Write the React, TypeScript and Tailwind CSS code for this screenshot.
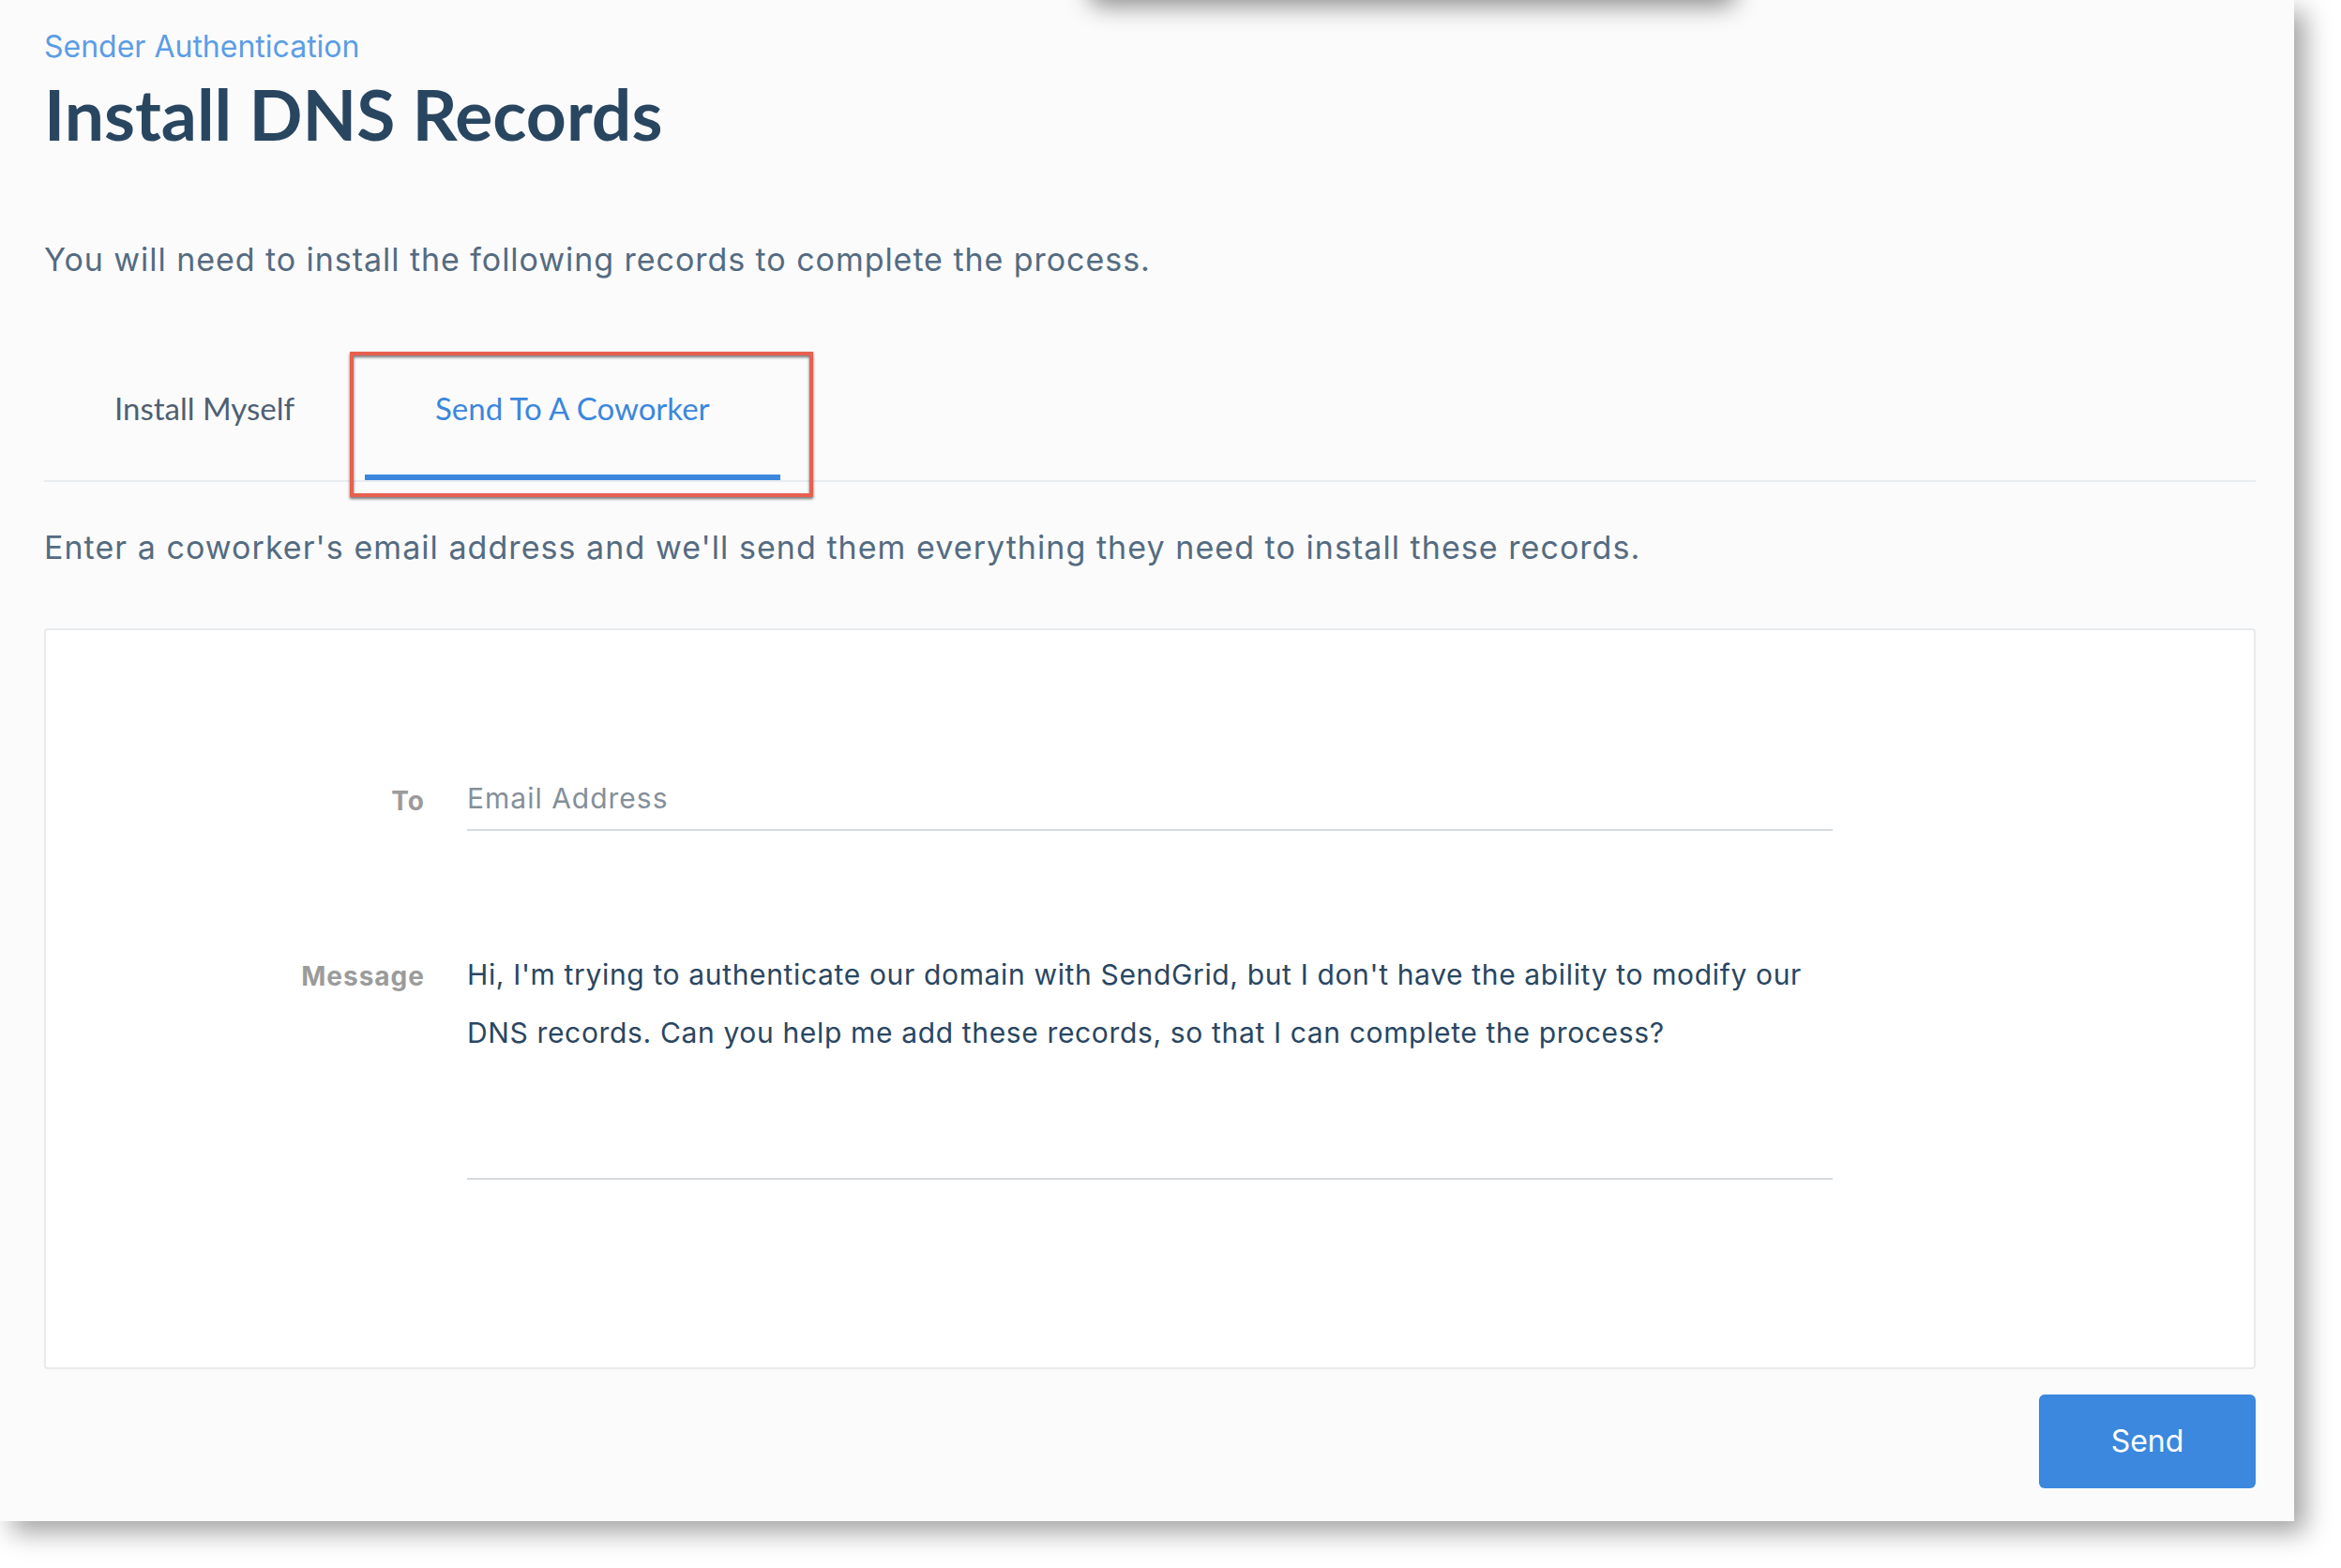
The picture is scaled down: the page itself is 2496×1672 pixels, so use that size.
import React from "react";

function Tab({ label, active }: { label: string; active?: boolean }) {
  return (
    <div
      className={
        "px-[75px] pt-0 pb-[49px] border-b-[6px] text-[33px] leading-[44px] font-['Lato',sans-serif] " +
        (active ? "border-[#3b87dd] text-[#3b87dd]" : "border-transparent text-[#4e6073]")
      }
    >
      {label}
    </div>
  );
}

export default function App() {
  return (
    <div className="min-h-screen bg-white font-['Inter',sans-serif]">
      <div className="relative w-[2446px] h-[1622px] bg-[#fbfbfb] shadow-[12px_12px_26px_rgba(0,0,0,0.36)] pl-[47px] pr-[41px] pt-[30px]">
        {/* shadow of a floating element cut off at the top */}
        <div className="absolute left-[1162px] top-[-70px] w-[688px] h-[70px] rounded-xl bg-[#fbfbfb] shadow-[0_6px_26px_rgba(0,0,0,0.45)]" />

        <p className="text-[32px] leading-[40px] text-[#5b9de6]">Sender Authentication</p>
        <h1 className="mt-[6px] text-[75px] leading-[90px] font-bold text-[#294661] font-['Lato',sans-serif]">
          Install DNS Records
        </h1>
        <p className="mt-[89px] text-[34px] leading-[44px] tracking-[0.95px] text-[#546b81]">
          You will need to install the following records to complete the process.
        </p>

        <div className="relative mt-[114px] flex border-b-2 border-[#e9ecef]">
          <Tab label="Install Myself" />
          <Tab label="Send To A Coworker" active />
          {/* annotation box round the active tab */}
          <div className="absolute left-[326px] top-[-38px] w-[494px] h-[155px] border-4 border-[#e8604f] drop-shadow-[0_2px_1.5px_rgba(0,0,0,0.55)]" />
        </div>

        <p className="mt-[48px] text-[34px] leading-[44px] tracking-[1.05px] text-[#546b81]">
          Enter a coworker's email address and we'll send them everything they need to install these records.
        </p>

        <div className="mt-[64px] h-[790px] rounded bg-white border-2 border-[#e8eaed] pt-[159px]">
          <div className="flex items-start gap-[45px]">
            <label className="w-[404px] pt-[3px] text-right text-[28px] leading-[40px] font-bold tracking-[1px] text-[#9b9b9b]">
              To
            </label>
            <input
              placeholder="Email Address"
              className="w-[1456px] bg-transparent outline-none pb-[13px] border-b-2 border-[#d5dade] text-[30px] leading-[40px] tracking-[1px] text-[#294661] placeholder:text-[#858f99]"
            />
          </div>
          <div className="mt-[122px] flex items-start gap-[45px]">
            <label className="w-[404px] pt-[2px] text-right text-[28px] leading-[62px] font-bold tracking-[1px] text-[#9b9b9b]">
              Message
            </label>
            <div className="w-[1456px] h-[250px] border-b-2 border-[#d5dade] text-[30px] leading-[62px] tracking-[0.65px] text-[#294661]">
              Hi, I'm trying to authenticate our domain with SendGrid, but I don't have the ability to modify our DNS records. Can you help me add these records, so that I can complete the process?
            </div>
          </div>
        </div>

        <div className="mt-[27px] flex justify-end">
          <button className="w-[231px] h-[100px] rounded-md bg-[#3b88de] text-white text-[32px]">Send</button>
        </div>
      </div>
    </div>
  );
}
